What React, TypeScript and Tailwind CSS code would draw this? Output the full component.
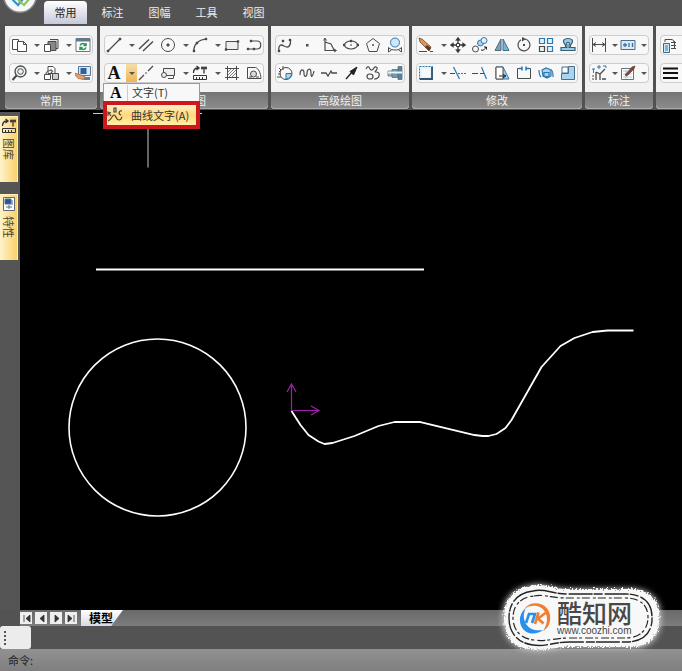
import type { ReactNode } from "react";

const D = "#4a4a4a";
const B = "#2f78ad";
const L = "#a9d3ee";

const icons: Record<string, ReactNode> = {
  copy: (
    <g fill="#fff" stroke={D}>
      <path d="M1.500 2.500h6v10h-6z" />
      <path d="M6.500 4.500h6l3 3v7h-9z" />
      <path d="M12.500 4.500v3h3" fill="none" />
    </g>
  ),
  paste: (
    <g fill="#e4e4e4" stroke={D}>
      <path d="M7 2.500h8v9h-3" />
      <path d="M5 4.500h8v9H5z" fill="#888" />
      <path d="M1.500 7.500h6v7h-6z" fill="#fff" />
    </g>
  ),
  refresh: (
    <g>
      <path d="M1 1.500h14v13H1z" fill="#fff" stroke="#64788a" />
      <path d="M1 1.500h14v3H1z" fill="#64788a" />
      <path d="M5 8.500c1-2.500 4-2.500 5.500-.5M11 6v2.500H8.500M11 10.500c-1 2.500-4 2.500-5.500.5M5 13v-2.500h2.500" fill="none" stroke="#21964f" strokeWidth="1.500" />
    </g>
  ),
  zoom: (
    <g fill="none" stroke={D}>
      <circle cx="9.500" cy="6.500" r="5.500" fill="#eef3f6" strokeWidth="1.300" />
      <circle cx="9.500" cy="6.500" r="2.800" />
      <path d="M5.500 10.500L1.500 15" strokeWidth="2" />
    </g>
  ),
  insert: (
    <g fill="#fff" stroke={D}>
      <path d="M5 1.500h5l2 2v5H5z" />
      <path d="M1.500 9.500h6v5h-6z" />
      <path d="M9.500 8.500h6v6h-6z" fill="#ccc" />
      <path d="M3 9c0-3 3-4 6-3M7.500 4L10 6.500 7.500 8" fill="none" />
    </g>
  ),
  monitor: (
    <g>
      <path d="M3.500 1.500h12v9h-12z" fill="#dbe8f5" stroke="#5a7696" />
      <path d="M5.500 3h6v6h-6z" fill="#2f5f9e" />
      <path d="M0 8l6 2 4 1.500-2 3-5-1L0 10z" fill="#e1a06d" stroke="#9b5a2d" strokeWidth=".600" />
      <path d="M10 12h5v3H8z" fill="#6b7d94" />
    </g>
  ),
  line: (
    <g stroke={D} strokeWidth="1.300">
      <path d="M2 14L14 2" />
      <path d="M1 13h2v2H1zM13 1h2v2h-2z" fill={D} strokeWidth=".500" />
    </g>
  ),
  parallel: <path d="M1 12L11 2.500M5 14L15 4.500" stroke={D} strokeWidth="1.400" />,
  circle: (
    <g fill="none" stroke={D}>
      <circle cx="8" cy="8" r="6.500" />
      <path d="M7 7h2v2H7z" fill={D} />
    </g>
  ),
  arc: (
    <g fill="none" stroke={D}>
      <path d="M1.500 14C2 7 6 3 14 2" strokeWidth="1.200" />
      <path d="M1 13h2v2H1zM4 5h2v2H4zM13 1h2v2h-2z" fill={D} strokeWidth=".400" />
    </g>
  ),
  rect: (
    <g fill="none" stroke={D}>
      <path d="M2 4.500h12v8H2z" fill="#eee" />
      <path d="M1 11.500h2v2H1zM13 3.500h2v2h-2z" fill={D} strokeWidth=".400" />
    </g>
  ),
  hook: (
    <g fill="none" stroke={D}>
      <path d="M5 4h6c5 0 5 8 0 8H2" strokeWidth="1.200" />
      <path d="M4 3h2v2H4zM1 11h2v2H1zM7 11h2v2H7z" fill={D} strokeWidth=".400" />
    </g>
  ),
  center: <path d="M1 15L6 10M7.500 8.500l1-1M10 6l5-5" stroke={D} strokeWidth="1.300" />,
  block: (
    <g fill="#eee" stroke={D}>
      <path d="M3.500 3.500h11v7h-11z" />
      <circle cx="4" cy="10" r="2.500" />
      <path d="M8 13.500h5M13.500 10.500v3" />
    </g>
  ),
  library: (
    <g fill="none" stroke="#333">
      <path d="M1.500 8C1.500 4 3 3 6 3M4.500 1L7 3 4.500 5M9 3h6M12 1.500v7M10 1.500v3M14 1.500v3" strokeWidth="1.300" />
      <path d="M1.500 10.500h13v4h-13zM4.500 12v2M7.500 12v2M10.500 12v2" />
    </g>
  ),
  hatch: (
    <g fill="none" stroke={D}>
      <path d="M3.500 1v14M12.500 1v14M1 3.500h14M1 12.500h14" />
      <path d="M4 7l3-3M4 10l6-6M5 12l7-7M8 12l4-4" strokeWidth=".700" />
    </g>
  ),
  region: (
    <g fill="none" stroke={D}>
      <path d="M1.500 2.500h8c3 1 5 5 5.500 11H1.500z" />
      <circle cx="7.500" cy="9" r="3" fill="#ddd" />
      <path d="M3 12h3M10 12h3" />
    </g>
  ),
  spline: (
    <g fill="none" stroke={D}>
      <path d="M2 14c-1-6 2-7 5-5 5 3 7-1 6.500-6" strokeWidth="1.300" />
      <path d="M1 13h2v2H1zM5 3h2v2H5zM12 2h2v2h-2z" fill={D} strokeWidth=".400" />
    </g>
  ),
  point: <path d="M7 7h2.500v2.500H7z" fill={D} />,
  polyline: (
    <g fill="none" stroke={D}>
      <path d="M4 2v11.500h11M4 5l6 2 3 6" strokeWidth="1.200" />
      <path d="M2.500 3.500L4 1l1.500 2.500M13 12l2.500 1.500L13 15" />
    </g>
  ),
  ellipse: (
    <g fill="none" stroke={D} strokeWidth="1.200">
      <ellipse cx="8" cy="8" rx="6.500" ry="4" />
      <path d="M7 3h2v2H7zM0 7h2v2H0zM14 7h2v2h-2zM7.500 7.500h1v1h-1z" fill={D} strokeWidth=".400" />
    </g>
  ),
  polygon: (
    <g fill="#f7f7f7" stroke={D}>
      <path d="M8 1.500l6.500 5L12 14.500H4L1.500 6.500z" />
      <path d="M7.500 7.500h1v1h-1z" />
    </g>
  ),
  contour: (
    <g fill="none" stroke={D}>
      <circle cx="8" cy="5.500" r="4.500" fill="#cfe8f7" stroke={B} />
      <path d="M1.500 15v-4.500c2 2 4 2.500 6.500 2.500s4.500-.5 6.500-2.500V15l-3-2M1.500 15l3-2" />
    </g>
  ),
  gear: (
    <g fill="none" stroke={D}>
      <circle cx="9" cy="8.500" r="6" />
      <path d="M9 8.500h5.500c0 3-2 5.500-5.500 5.500z" fill={L} stroke={B} />
      <path d="M2 3l2 2-2 2M1 9h3M6 1v4M0 12h4" />
    </g>
  ),
  wave: <path d="M1 10c0-6 4-7 4-2s3 4 3 0 4-6 4 0 2 3 3-2" fill="none" stroke={D} strokeWidth="1.200" />,
  breakline: <path d="M0 8h5l2 3 3-5 1 2h5" fill="none" stroke={D} strokeWidth="1.300" />,
  arrow: (
    <g stroke="#222">
      <path d="M3 14l7-8" strokeWidth="1.400" />
      <path d="M14 2L7 6.500 10.500 10z" fill="#222" />
    </g>
  ),
  curves: (
    <g fill="none" stroke={D} strokeWidth="1.200">
      <path d="M1 4c2-4 3-2 4 0s3 1 4-1 4-1 3 1-3 3-1 3 4 1 3 4-3 3-5 3" />
      <ellipse cx="5" cy="11.500" rx="3" ry="2.500" />
    </g>
  ),
  shaft: (
    <g stroke="#5b7282" strokeWidth=".800">
      <path d="M1 6h4v5H1z" fill="#99b8ca" />
      <path d="M5 4.500h6v8H5z" fill="#7698ad" />
      <path d="M11 1.500h4v13h-4z" fill="#5d7f97" />
      <path d="M1 7.500h14" stroke="#e7f5ff" strokeWidth="2" />
    </g>
  ),
  erase: (
    <g>
      <path d="M1 1l3 1 9 8-2 4-9-9z" fill="#d69a58" stroke="#76451f" strokeWidth=".800" />
      <path d="M9 8l4 3-2 3-4-4z" fill="#573c2b" />
      <path d="M1 14.500h8M12 14.500h3" stroke={D} />
    </g>
  ),
  move: (
    <g stroke="#333" fill="#333">
      <path d="M8 2v12M2 8h12" strokeWidth="1.300" />
      <path d="M8 0l2.500 3.500h-5zM8 16l2.500-3.500h-5zM0 8l3.500-2.500v5zM16 8l-3.500-2.500v5z" strokeWidth=".300" />
      <path d="M6.500 6.500h3v3h-3z" fill="#fff" />
    </g>
  ),
  duplicate: (
    <g fill="none" stroke={B}>
      <circle cx="8.500" cy="6" r="3" fill={L} />
      <circle cx="12" cy="3.500" r="3" fill="#def1fc" />
      <circle cx="3.500" cy="12" r="3" stroke={D} />
      <path d="M9 13c3 1 4-1 5-3M12 10h2.500v2.500" stroke="#222" />
    </g>
  ),
  mirror: (
    <g stroke="#466c86">
      <path d="M7 2v11.500H1z" fill="#879eac" />
      <path d="M9 2v11.500h6z" fill="#72b6de" />
    </g>
  ),
  rotate: (
    <g fill="none" stroke={D} strokeWidth="1.200">
      <path d="M9 2a6 6 0 1 1-4 .7" />
      <path d="M6 0l4 2-4 2.500z" fill={D} stroke="none" />
      <path d="M7 7h2v2H7z" fill={D} stroke="none" />
    </g>
  ),
  array: (
    <g fill="#e4f3fc" stroke={B} strokeWidth="1.200">
      <path d="M1.500 1.500h5v5h-5zM9.500 1.500h5v5h-5zM9.500 9.500h5v5h-5z" />
      <path d="M1.500 9.500h5v5h-5z" stroke={D} />
    </g>
  ),
  offset: (
    <g fill="#9ccbe6" stroke="#355f7a" strokeWidth="1.200">
      <path d="M1 13.500v-3h4.500V8C1 3 5 1.500 8 1.500S15 3 10.500 8v2.500H15v3z" />
      <path d="M4 10.500h3V7.500c-2-3 4-3 2 0v3h3" fill="#fff" />
    </g>
  ),
  scale: (
    <g fill="none" stroke={B}>
      <path d="M1.500 1.500h13v13h-13z" fill="#e5f3fb" strokeDasharray="2 1" />
      <path d="M14 2v12H2" stroke="#305673" strokeWidth="1.800" />
      <path d="M4 4h8v8H4z" fill="#f8f8f8" stroke="none" />
    </g>
  ),
  trim: (
    <g fill="none" stroke={B}>
      <path d="M3.500 2l6 12" strokeWidth="1.200" />
      <path d="M0 8.500h5" stroke={D} />
      <path d="M8 8.500h8" strokeDasharray="2 1" />
    </g>
  ),
  extend: (
    <g fill="none" stroke={B}>
      <path d="M9.500 2l5 12" strokeWidth="1.200" />
      <path d="M0 8.500h6M8 8.500h4" stroke={D} strokeWidth="1.200" />
    </g>
  ),
  stretch: (
    <g fill="#fff" stroke={D}>
      <path d="M2 2h7l6 12H2z" fill={L} stroke={B} />
      <path d="M2 2h7v12H2z" />
      <path d="M5 11h6M9 9l3 2-3 2" fill="none" stroke="#222" />
    </g>
  ),
  split: (
    <g fill="none" stroke={D}>
      <path d="M5 3.500H1.500v10h13v-10H11" fill="#f4f9fc" />
      <path d="M3 3.500h3M10 3.500h3M6 1.500v4M10 1.500v4" stroke={B} strokeWidth="1.500" />
    </g>
  ),
  explode: (
    <g fill={L} stroke={B} strokeWidth="1.200">
      <path d="M4 5l4-2 5 2v6l-4 2-4-2zM6 7.500h5v4H6z" />
      <path d="M1 5c0 3 0 5 2 7M13 5c2 0 2 3 2 7" fill="none" />
    </g>
  ),
  chamfer: (
    <g fill={L} stroke="#496f8a">
      <path d="M1.500 8.500h7v-7h6v13h-13z" />
      <path d="M2 2h6v6H2z" fill="#fff" />
    </g>
  ),
  dimension: <path d="M1.500 1v14M14.500 1v14M2 7.500h12M5 5.500l-3 2 3 2M11 5.500l3 2-3 2" fill="none" stroke={D} />,
  tolerance: (
    <g fill="#d7eafa" stroke="#466d93">
      <path d="M1 3.500h14v9H1z" />
      <path d="M3 8h4M5 6v4M9 6v4M12.500 6v4" fill="none" strokeWidth="1.300" />
    </g>
  ),
  coordinate: (
    <g fill="none" stroke={D}>
      <path d="M5 7v8M9 15V9l5-5M5 7l4 2M11 14h4" strokeWidth="1.300" />
      <path d="M1 4h3M2.500 4v4M7 1h2v2H7zM12 1h3v2" stroke={B} />
      <path d="M1 11h2M1 14h2" />
    </g>
  ),
  editnote: (
    <g fill="#fff" stroke="#617483">
      <path d="M1.500 3.500h12v11h-12z" />
      <path d="M3 6h5M3 9h9M3 12h9M6 5v9" stroke="#a4b6c4" strokeWidth=".800" />
      <path d="M5 10l7-8 3-1-1 3-7 7z" fill="#804838" stroke="#5c3529" strokeWidth=".600" />
    </g>
  ),
  layers: (
    <g fill="#d5eaf7" stroke={D}>
      <path d="M1.500 6.500h6v9h-6z" stroke="#38688c" />
      <path d="M3 9h3M3 11h3M3 13h3" stroke={B} />
      <path d="M3 5V2.500h6c2 0 3 1 3 3M9 5.500h5M9 8.500h5M9 11.500h5M12.500 4v8" fill="none" />
    </g>
  ),
  lineweight: <path d="M1 3.500h15M1 8h15M1 13h15" stroke="#111" strokeWidth="2.200" />,
  curvetext: (
    <g fill="none" stroke="#444" strokeWidth="1.200">
      <path d="M1 14c4-1 4-6 6-6s2 5 5 5 2-2 3-3" />
      <path d="M1 5l3 4M1 9V5l3 1M7 1h2v4H7zM15 4c-3-1-4 3-1 4" />
    </g>
  ),
  properties: (
    <g fill="#fff" stroke="#5b6a7d">
      <path d="M2.500 1.500h11v13h-11z" />
      <path d="M4 3h6v5H4z" fill="#2254a0" />
      <path d="M5 11h6M8 9v4M11 4v5" fill="none" />
    </g>
  ),
};

function Icon({ name }: { name: string }) {
  return (
    <svg viewBox="0 0 16 16" className="size-4 shrink-0" aria-hidden="true">
      {icons[name]}
    </svg>
  );
}

type Tool = { icon: string; label: string; caret?: boolean };

function t(icon: string, label: string, caret = false): Tool {
  return { icon, label, caret };
}

function ToolButton({ tool, tight }: { tool: Tool; tight?: boolean }) {
  return (
    <div className="flex shrink-0">
      <button type="button" aria-label={tool.label} className="flex h-[18px] w-[18px] items-center justify-center">
        {tool.icon === "text" ? (
          <span className="font-['Liberation_Serif',serif] text-lg leading-none font-bold text-[#111]">A</span>
        ) : (
          <Icon name={tool.icon} />
        )}
      </button>
      {tool.caret && (
        <button
          type="button"
          aria-label={tool.label + "选项"}
          className={
            tool.icon === "text"
              ? "-mr-1 ml-[3px] flex h-[18px] w-[11px] items-center justify-center bg-gradient-to-b from-[#f5dda7] to-[#f0b64c]"
              : tight
                ? "-mr-1 ml-[3px] flex w-2 items-center justify-center"
                : "-mr-1 ml-1 flex w-[10px] items-center justify-center"
          }
        >
          <span className="border-x-[3px] border-t-[3px] border-x-transparent border-t-[#555]" />
        </button>
      )}
    </div>
  );
}

function Panel({ title, rows, tight, children }: { title: string; rows: Tool[][]; tight?: boolean; children?: ReactNode }) {
  return (
    <section className="relative flex h-[83px] shrink-0 flex-col rounded-b bg-[#f2f2f2]">
      <div className="flex flex-1 flex-col gap-2 px-1 pt-[9px]">
        {rows.map((row, i) => (
          <div
            key={i}
            className={
              tight
                ? "flex h-5 gap-1 rounded-sm border border-[#cdcdcd] bg-[#f8f8f8] pr-1"
                : "flex h-5 gap-1 rounded-sm border border-[#cdcdcd] bg-[#f8f8f8]"
            }
          >
            {row.map((tool) => (
              <ToolButton key={tool.icon} tool={tool} tight={tight} />
            ))}
          </div>
        ))}
      </div>
      <h2 className="h-[17px] rounded-b border-b border-[#aaa] bg-gradient-to-b from-[#747474] to-[#8b8b8b] text-center text-[11px] leading-4 text-[#f2f2f2]">
        {title}
      </h2>
      {children}
    </section>
  );
}

function TextMenu() {
  return (
    <div role="menu" className="absolute top-[57px] left-[3px] z-20 w-[97px] bg-[#f8f8f8] text-[11px] text-[#333]">
      <button type="button" role="menuitem" className="flex h-[18px] w-full items-center border border-b-0 border-[#999] pl-1">
        <span className="w-5 border-r border-[#ccc] pl-0.5 text-left font-['Liberation_Serif',serif] text-base leading-4 font-bold text-black">A</span>
        <span className="pl-1">文字(T)</span>
      </button>
      <button
        type="button"
        role="menuitem"
        className="flex h-7 w-full items-center gap-2 border-4 border-[#cf171b] bg-gradient-to-b from-[#fff1c8] via-[#ffd878] to-[#fff0a4]"
      >
        <Icon name="curvetext" />
        <span className="whitespace-nowrap">曲线文字(A)</span>
      </button>
    </div>
  );
}

function Ribbon() {
  return (
    <div className="relative z-10 flex h-[86px] gap-[3px] bg-[#515151] pt-0.5 pl-[5px]">
      <Panel
        title="常用"
        rows={[
          [t("copy", "复制", true), t("paste", "粘贴", true), t("refresh", "刷新")],
          [t("zoom", "缩放", true), t("insert", "插入", true), t("monitor", "显示")],
        ]}
      />
      <Panel
        title="基本绘图"
        rows={[
          [t("line", "直线", true), t("parallel", "平行线"), t("circle", "圆", true), t("arc", "圆弧", true), t("rect", "矩形"), t("hook", "多段线")],
          [t("text", "文字", true), t("center", "中心线"), t("block", "块", true), t("library", "图库", true), t("hatch", "剖面线"), t("region", "填充")],
        ]}
      >
        <TextMenu />
      </Panel>
      <Panel
        title="高级绘图"
        rows={[
          [t("spline", "样条"), t("point", "点"), t("polyline", "公式曲线"), t("ellipse", "椭圆"), t("polygon", "正多边形"), t("contour", "圆弧拟合")],
          [t("gear", "齿轮"), t("wave", "波浪线"), t("breakline", "双折线"), t("arrow", "箭头"), t("curves", "云线"), t("shaft", "孔轴")],
        ]}
      />
      <Panel
        title="修改"
        rows={[
          [t("erase", "删除", true), t("move", "平移"), t("duplicate", "平移复制"), t("mirror", "镜像"), t("rotate", "旋转"), t("array", "阵列"), t("offset", "等距线")],
          [t("scale", "缩放", true), t("trim", "裁剪"), t("extend", "延伸"), t("stretch", "拉伸"), t("split", "打断"), t("explode", "分解"), t("chamfer", "过渡")],
        ]}
      />
      <Panel
        title="标注"
        tight
        rows={[
          [t("dimension", "尺寸标注", true), t("tolerance", "形位公差", true)],
          [t("coordinate", "坐标标注", true), t("editnote", "标注编辑", true)],
        ]}
      />
      <Panel
        title=""
        rows={[
          [t("layers", "图层"), t("copy", "图层复制", true)],
          [t("lineweight", "线宽"), t("rect", "颜色", true)],
        ]}
      />
    </div>
  );
}

function Drawing() {
  return (
    <svg className="absolute inset-0 h-full w-full" role="img" aria-label="绘图区" fill="none">
      <path d="M73 3.500h109M128 3.500v54" stroke="#c8c8c8" />
      <path d="M76 159.500h328" stroke="#fff" strokeWidth="2" />
      <circle cx="137.500" cy="317.500" r="88.500" stroke="#fff" strokeWidth="1.600" />
      <path
        d="M271.500 301l9 14 8 10 10 6.500 6 2.500 8-1 22-7 24-10 16-4h26l54 13 8 1h6l8-2 9-6 6-8 30-53 19-21 14-8 18-6 15-1.500h26"
        stroke="#fff"
        strokeWidth="1.800"
        strokeLinejoin="round"
      />
      <path d="M271.500 301v-27M267 282l4.500-8 4.500 8M271 300.500h28M291 296l8 4.500-8 4.500" stroke="#a31fa8" strokeWidth="1.200" />
    </svg>
  );
}

function SideTab({ icon, label }: { icon: string; label: string }) {
  return (
    <button
      type="button"
      className="flex h-[66px] w-[18px] flex-col items-center gap-1 border-t border-r border-[#fff0bb] bg-gradient-to-r from-[#fff3c9] to-[#fbd066] pt-px text-[11px] leading-4 text-[#4c4630]"
    >
      <Icon name={icon} />
      <span className="[text-orientation:sideways] [writing-mode:vertical-rl]">{label}</span>
    </button>
  );
}

function Badge() {
  return (
    <div className="absolute right-5 bottom-[19px] z-30 flex h-[68px] w-[162px] items-center pl-[19px]">
      <svg viewBox="0 0 162 68" className="absolute inset-0 h-full w-full overflow-visible" aria-hidden="true">
        <defs>
          <filter id="rough" x="-10%" y="-20%" width="120%" height="140%">
            <feTurbulence type="fractalNoise" baseFrequency=".6" numOctaves="2" result="n" />
            <feDisplacementMap in="SourceGraphic" in2="n" scale="7" xChannelSelector="R" yChannelSelector="G" />
            <feGaussianBlur stdDeviation=".7" />
          </filter>
          <filter id="glow" x="-10%" y="-20%" width="120%" height="140%">
            <feGaussianBlur stdDeviation="3" />
          </filter>
        </defs>
        <path d="M30 2c14-4 22 4 38 3h60c22-1 34 12 32 29 1 18-10 31-30 29H70c-15-1-24 5-40 2C12 64 3 51 3 34 3 16 12 5 30 2z" fill="#ddd" filter="url(#glow)" />
        <path d="M30 2c14-4 22 4 38 3h60c21-1 33 12 31 29 1 18-10 30-30 29H70c-15-1-24 5-40 2C12 64 4 51 4 34 4 16 12 5 30 2z" fill="#f8f8f8" filter="url(#rough)" />
        <g fill="none" stroke="#252525" strokeLinejoin="round">
          <path d="M33 7c12-3 18 3 34 3h59c18 0 26 10 26 23 1 15-9 25-26 25H69c-16 0-23 5-36 3C17 59 9 48 9 34 9 19 17 9 33 7z" strokeWidth="1.400" strokeDasharray="24 1 9 2" />
          <path d="M34 12c10-2 18 2 32 2h60c15 0 22 8 22 19 0 13-8 21-23 21H68c-14 0-22 4-34 2-13-1-21-10-21-22 0-13 8-21 21-22z" strokeWidth="1.200" strokeDasharray="8 3 3 2" />
        </g>
      </svg>
      <svg viewBox="0 0 32 32" className="relative size-8 shrink-0" aria-hidden="true" fill="none">
        <circle cx="16" cy="16" r="15" fill="#f8f8f8" />
        <path d="M5 7C13-3 29 1 31 13c1 8-2 13-7 16 4-6 5-12 3-17C23 2 12 2 5 7z" fill="#f07e30" />
        <path d="M7 6C-1 12-1 23 6 29c6 4 13 3 18-1-7 1-13 0-17-6C4 17 4 11 7 6z" fill="#2a8fea" />
        <path d="M7 21l3-9h6l-3 9" stroke="#2a8fea" strokeWidth="2.600" />
        <path d="M19.500 10.500L16 22M26.500 11l-7.500 5.500 5.500 5" stroke="#f07e30" strokeWidth="2.600" />
      </svg>
      <a href="#coozhi" className="relative flex flex-col items-start gap-px pl-[6px] text-[#484848]">
        <span className="text-[25px] leading-[25px] font-medium whitespace-nowrap">酷知网</span>
        <span className="font-['Liberation_Sans',sans-serif] text-[10px] leading-[10px]">www.coozhi.com</span>
      </a>
    </div>
  );
}

const pagers = [
  { label: "首页", d: "M3 2v7M9 2L5 5.500 9 9z" },
  { label: "上一页", d: "M8 2L4 5.500 8 9z" },
  { label: "下一页", d: "M4 2l4 3.500L4 9z" },
  { label: "末页", d: "M2 2l4 3.500L2 9zM8 2v7" },
];

export default function App() {
  return (
    <div className="relative flex min-h-screen flex-col overflow-hidden bg-[#535353] font-['Noto_Sans_CJK_SC',sans-serif]">
      <header className="relative flex h-6 bg-[#535353] pl-11">
        <svg viewBox="0 0 38 14" className="absolute top-0 left-0 h-[14px] w-[38px]" aria-hidden="true">
          <circle cx="20" cy="-4" r="17" fill="#888" />
          <circle cx="20" cy="-4" r="15.500" fill="#f5f7f8" />
          <path d="M12-1l6 6 5-6" fill="none" stroke="#3b93cc" strokeWidth="2.200" />
          <path d="M18 0l6 5 6-7" fill="none" stroke="#8fc45a" strokeWidth="2.200" />
        </svg>
        <nav className="flex items-end text-[11px] leading-[21px] text-[#eee]">
          <button type="button" className="h-[23px] w-[43px] rounded-t bg-gradient-to-b from-white to-[#c6c9da] text-[#222]">
            常用
          </button>
          <div className="flex pl-[2px]">
            {["标注", "图幅", "工具", "视图"].map((name) => (
              <button key={name} type="button" className="h-[23px] w-[47px]">
                {name}
              </button>
            ))}
          </div>
        </nav>
      </header>
      <Ribbon />
      <div className="flex flex-1">
        <aside className="flex w-5 shrink-0 flex-col gap-3 border-t-2 border-black bg-[#555] pt-1">
          <SideTab icon="library" label="图库" />
          <SideTab icon="properties" label="特性" />
        </aside>
        <main className="relative flex-1 bg-black">
          <Drawing />
        </main>
      </div>
      <div className="flex h-4 pl-5">
        <div className="flex flex-1 items-center bg-gradient-to-b from-[#696969] to-[#7d7d7d]">
          <div className="flex gap-[3px]">
            {pagers.map((p) => (
              <button key={p.label} type="button" aria-label={p.label} className="flex size-3 items-center justify-center bg-[#eee]">
                <svg viewBox="0 0 11 11" className="size-[11px]" fill="#333" stroke="#333" strokeWidth=".800">
                  <path d={p.d} />
                </svg>
              </button>
            ))}
          </div>
          <button
            type="button"
            className="ml-1 h-4 w-[42px] bg-gradient-to-b from-white to-[#d9d9e6] pl-2 text-left text-[12px] leading-4 font-bold text-black [clip-path:polygon(0_0,100%_0,72%_100%,0_100%)]"
          >
            模型
          </button>
        </div>
      </div>
      <div className="flex h-[23px]">
        <div className="flex w-[31px] flex-col justify-center gap-[2px] rounded-[3px] bg-[#ececec] pl-1">
          {[0, 1, 2, 3].map((n) => (
            <span key={n} className="size-[2px] bg-[#555]" />
          ))}
        </div>
      </div>
      <footer className="flex h-[22px] items-center gap-1 bg-gradient-to-b from-[#929292] to-[#7f7f7f] pl-2 text-[11px] text-[#222]">
        <label htmlFor="command">命令:</label>
        <input id="command" type="text" className="h-4 flex-1 bg-transparent outline-none" />
      </footer>
      <Badge />
    </div>
  );
}
